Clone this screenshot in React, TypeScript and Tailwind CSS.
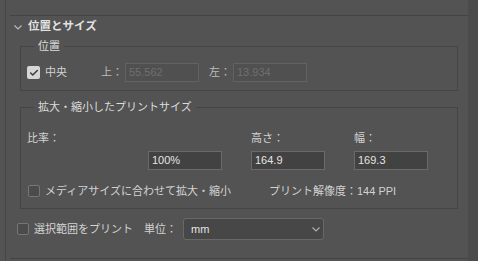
import { Check } from "lucide-react";

const font = { fontFamily: '"Liberation Sans", "Noto Sans CJK JP", sans-serif' };

function Chevron({ className = "" }: { className?: string }) {
  return (
    <svg width="8" height="5" viewBox="0 0 8 5" className={"shrink-0 " + className}>
      <polyline points="0.5,0.5 4,4 7.5,0.5" fill="none" stroke="currentColor" strokeWidth="1.1" />
    </svg>
  );
}

function Box({ checked, className = "" }: { checked?: boolean; className?: string }) {
  return checked ? (
    <span className={"w-[13px] h-[13px] rounded-[2px] bg-[#d6d6d6] flex items-center justify-center shrink-0 " + className}>
      <Check size={10} strokeWidth={3.5} className="text-[#3a3a3a]" />
    </span>
  ) : (
    <span className={"block w-[12px] h-[12px] rounded-[2px] border border-[#767676] bg-[#4b4b4b] shrink-0 " + className} />
  );
}

function Field({ value, disabled }: { value: string; disabled?: boolean }) {
  return (
    <div
      className={
        disabled
          ? "w-[74px] h-[19px] border border-[#626262] bg-[#505050] text-[#6f6f6f] text-[11px] leading-[17px] px-[3px]"
          : "w-[74px] h-[19px] border border-[#6a6a6a] bg-[#424242] text-[#e4e4e4] text-[11px] leading-[17px] px-[3px]"
      }
    >
      {value}
    </div>
  );
}

export default function App() {
  return (
    <div className="w-[478px] h-[261px] bg-[#535353] flex overflow-hidden text-[#d2d2d2] text-[11px]" style={font}>
      <div className="w-[5px] shrink-0" />
      <div className="w-[1px] bg-[#464646] shrink-0" />
      <div className="flex-1 flex flex-col">
        <div className="h-[15px]" />
        <div className="ml-[4px] h-px bg-[#444444]" />
        <div className="h-[22px] flex items-center">
          <Chevron className="ml-[8px] text-[#bdbdbd]" />
          <span className="ml-[6px] font-bold text-[11.5px] text-[#e2e2e2]">位置とサイズ</span>
        </div>

        <fieldset className="ml-[14px] mr-[10px] border border-[#454545] pl-[6px] pr-[6px] pt-[9px] pb-[8px]">
          <legend className="ml-[7px] px-[4px] leading-[16px] text-[#dcdcdc]">位置</legend>
          <div className="flex items-center h-[19px]">
            <Box checked />
            <span className="ml-[5px] w-[56px]">中央</span>
            <span className="w-[24px] text-[#bcbcbc]">上：</span>
            <Field value="55.562" disabled />
            <span className="ml-[10px] w-[24px] text-[#bcbcbc]">左：</span>
            <Field value="13.934" disabled />
          </div>
        </fieldset>

        <fieldset className="mt-[9px] ml-[14px] mr-[10px] border border-[#454545] pl-[6px] pr-[6px] pt-[17px] pb-[8px]">
          <legend className="ml-[7px] px-[4px] leading-[14px] text-[#dcdcdc]">拡大・縮小したプリントサイズ</legend>
          <div className="flex h-[14px] items-center">
            <span className="w-[224px]">比率：</span>
            <span className="w-[103px]">高さ：</span>
            <span>幅：</span>
          </div>
          <div className="mt-[6px] flex pl-[121px] gap-[29px]">
            <Field value="100%" />
            <Field value="164.9" />
            <Field value="169.3" />
          </div>
          <div className="mt-[12px] h-[18px] flex items-center">
            <Box className="ml-[1px]" />
            <span className="ml-[5px] w-[224px]">メディアサイズに合わせて拡大・縮小</span>
            <span>プリント解像度：144 PPI</span>
          </div>
        </fieldset>

        <div className="mt-[9px] h-[22px] flex items-center">
          <Box className="ml-[11px]" />
          <span className="ml-[5px] w-[110px]">選択範囲をプリント</span>
          <span className="w-[39px]">単位：</span>
          <div className="w-[141px] h-[22px] rounded-[3px] border border-[#686868] bg-[#474747] flex items-center justify-between pl-[7px] pr-[3px] text-[#e4e4e4]">
            <span>mm</span>
            <Chevron className="text-[#b0b0b0]" />
          </div>
        </div>
        <div className="mt-[18px] ml-[4px] h-px bg-[#444444]" />
      </div>
      <div className="w-[10px] bg-[#4b4b4b] shrink-0" />
    </div>
  );
}
